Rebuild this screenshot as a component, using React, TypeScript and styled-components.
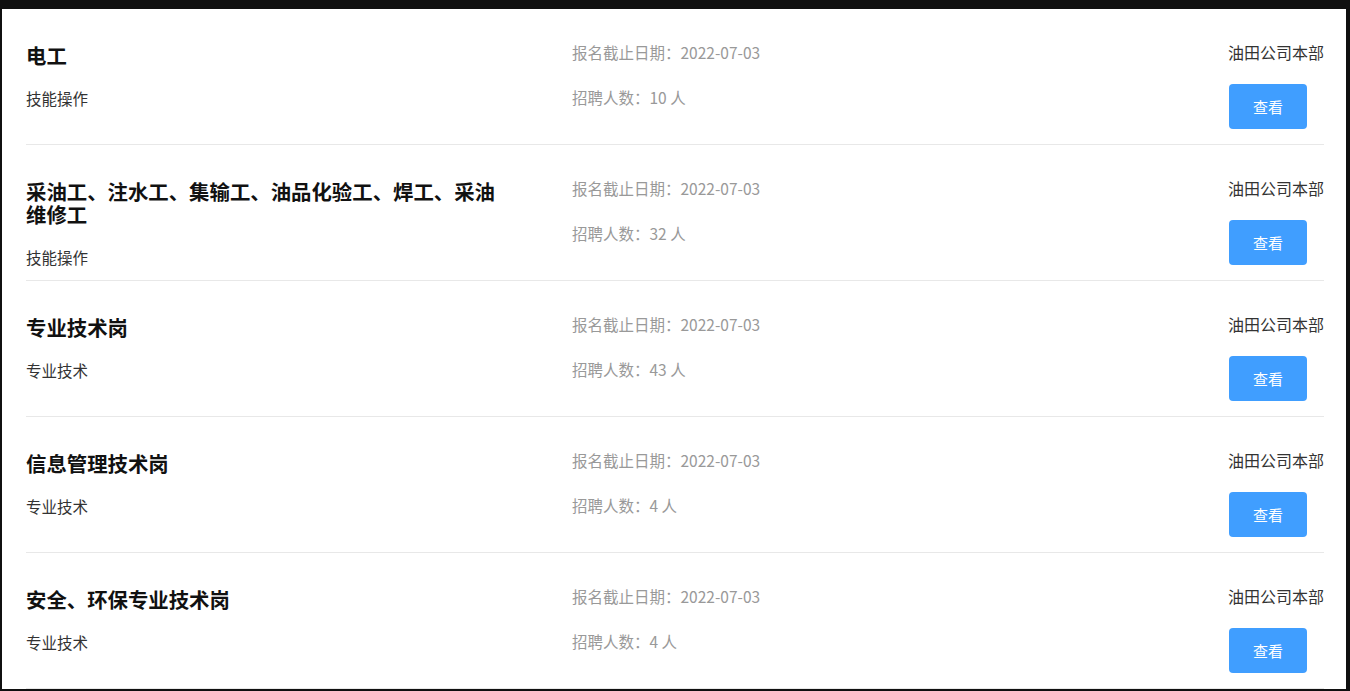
import React from 'react';
import styled, { createGlobalStyle } from 'styled-components';

interface Job {
  id: number;
  title: string;
  category: string;
  deadline: string;
  count: number;
  company: string;
}

const jobs: Job[] = [
  { id: 1, title: '电工', category: '技能操作', deadline: '2022-07-03', count: 10, company: '油田公司本部' },
  {
    id: 2,
    title: '采油工、注水工、集输工、油品化验工、焊工、采油维修工',
    category: '技能操作',
    deadline: '2022-07-03',
    count: 32,
    company: '油田公司本部',
  },
  { id: 3, title: '专业技术岗', category: '专业技术', deadline: '2022-07-03', count: 43, company: '油田公司本部' },
  { id: 4, title: '信息管理技术岗', category: '专业技术', deadline: '2022-07-03', count: 4, company: '油田公司本部' },
  { id: 5, title: '安全、环保专业技术岗', category: '专业技术', deadline: '2022-07-03', count: 4, company: '油田公司本部' },
];

const GlobalStyle = createGlobalStyle`
  html, body {
    margin: 0;
    padding: 0;
    background: #101010;
    font-family: "Noto Sans CJK SC", "Noto Sans", sans-serif;
  }
`;

const Panel = styled.div`
  margin: 9px 4px 0 2px;
  height: 680px;
  background: #fff;
  padding: 0 22px 0 24px;
  box-sizing: border-box;
  overflow: hidden;
`;

const Row = styled.div`
  display: grid;
  grid-template-columns: 546px 1fr auto;
  padding: 33px 0 16px;
  border-bottom: 1px solid #e8e8e8;
  height: 136px;
  box-sizing: border-box;
`;

const InfoCol = styled.div`
  padding-top: 2px;
`;

const Title = styled.div`
  max-width: 482px;
  font-size: 20.4px;
  line-height: 23px;
  font-weight: 700;
  color: #111;
`;

const Category = styled.div`
  margin-top: 23px;
  font-size: 15.5px;
  line-height: 16px;
  color: #333;
`;

const MetaCol = styled.div`
  display: flex;
  flex-direction: column;
  gap: 25px;
`;

const Meta = styled.div`
  font-size: 15.5px;
  line-height: 20px;
  color: #999;
`;

const ActionCol = styled.div`
  display: flex;
  flex-direction: column;
  align-items: flex-end;
  gap: 22px;
`;

const Company = styled.div`
  font-size: 16px;
  line-height: 20px;
  color: #333;
`;

const ViewButton = styled.button`
  width: 78px;
  height: 45px;
  margin-right: 17px;
  border: none;
  border-radius: 4px;
  background: #409eff;
  color: #fff;
  font-family: inherit;
  font-size: 15px;
  cursor: pointer;
`;

const App: React.FC = () => (
  <>
    <GlobalStyle />
    <Panel>
      {jobs.map((job) => (
        <Row key={job.id}>
          <InfoCol>
            <Title>{job.title}</Title>
            <Category>{job.category}</Category>
          </InfoCol>
          <MetaCol>
            <Meta>报名截止日期：{job.deadline}</Meta>
            <Meta>招聘人数：{job.count} 人</Meta>
          </MetaCol>
          <ActionCol>
            <Company>{job.company}</Company>
            <ViewButton>查看</ViewButton>
          </ActionCol>
        </Row>
      ))}
    </Panel>
  </>
);

export default App;
